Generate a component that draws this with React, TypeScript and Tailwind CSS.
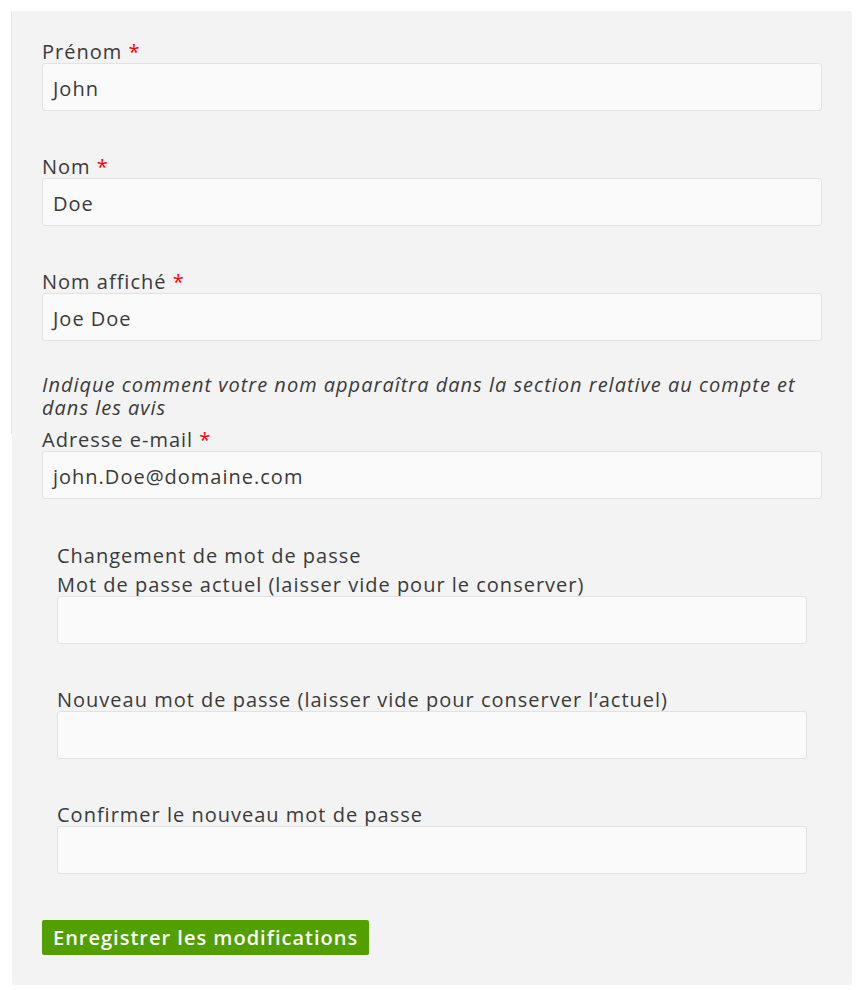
const font = { fontFamily: '"Open Sans", "Liberation Sans", sans-serif' };

function Field({ label, value, required }: { label: string; value?: string; required?: boolean }) {
  return (
    <div className="flex flex-col">
      <label className="text-[20px] leading-[23px] tracking-[1px]">
        {label}
        {required && <span className="text-[#ff0000]"> *</span>}
      </label>
      <div className="flex h-12 items-center rounded-[3px] border border-[#e2e2e2] bg-[#fafafa] px-[10px] pt-[3px] text-[20px] tracking-[1px]">
        {value}
      </div>
    </div>
  );
}

export default function App() {
  return (
    <div className="min-h-[990px] bg-white pt-[11px] pl-[12px] pr-[8px] text-[#3a3a3a]" style={font}>
      <div className="rounded-[3px] bg-[#f3f3f3] px-[30px] pb-[30px]">
        <div className="-ml-[31px] border-l border-[#e4e4e4] pl-[30px] pt-[29px] pb-[15px]">
          <div className="flex flex-col gap-[44px]">
            <Field label="Prénom" value="John" required />
            <Field label="Nom" value="Doe" required />
            <Field label="Nom affiché" value="Joe Doe" required />
          </div>
          <p className="mt-[32px] text-[20px] italic leading-[23px] tracking-[1px]">
            Indique comment votre nom apparaîtra dans la section relative au compte et dans les avis
          </p>
        </div>
        <div className="-mt-[6px]">
          <Field label="Adresse e-mail" value="john.Doe@domaine.com" required />
        </div>
        <div className="mt-[45px] px-[15px]">
          <div className="text-[20px] leading-[23px] tracking-[1px]">Changement de mot de passe</div>
          <div className="mt-[6px] flex flex-col gap-[44px]">
            <Field label="Mot de passe actuel (laisser vide pour le conserver)" />
            <Field label="Nouveau mot de passe (laisser vide pour conserver l’actuel)" />
            <Field label="Confirmer le nouveau mot de passe" />
          </div>
        </div>
        <button className="mt-[46px] h-[35px] rounded-[2px] bg-[#529f00] px-[11px] text-[20px] font-semibold tracking-[1px] text-white">
          Enregistrer les modifications
        </button>
      </div>
    </div>
  );
}
